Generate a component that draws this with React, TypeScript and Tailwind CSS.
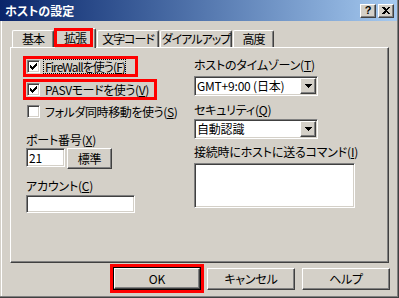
import React from "react";

const raised =
  "bg-[#d4d0c8] border border-t-white border-l-white border-r-[#404040] border-b-[#404040] shadow-[inset_-1px_-1px_#808080]";
const sunken =
  "bg-white border border-t-[#808080] border-l-[#808080] border-r-white border-b-white shadow-[inset_1px_1px_#404040,inset_-1px_-1px_#d4d0c8]";

function CheckBox({ checked }: { checked?: boolean }) {
  return (
    <span className={`${sunken} w-[13px] h-[13px] shrink-0 flex items-center justify-center`}>
      {checked && (
        <svg width="7" height="7" viewBox="0 0 7 7" shapeRendering="crispEdges">
          <rect x="0" y="2" width="1" height="3" fill="#000" />
          <rect x="1" y="3" width="1" height="3" fill="#000" />
          <rect x="2" y="4" width="1" height="3" fill="#000" />
          <rect x="3" y="3" width="1" height="3" fill="#000" />
          <rect x="4" y="2" width="1" height="3" fill="#000" />
          <rect x="5" y="1" width="1" height="3" fill="#000" />
          <rect x="6" y="0" width="1" height="3" fill="#000" />
        </svg>
      )}
    </span>
  );
}

function Arrow() {
  return (
    <svg width="7" height="4" viewBox="0 0 7 4" shapeRendering="crispEdges">
      <rect x="0" y="0" width="7" height="1" fill="#000" />
      <rect x="1" y="1" width="5" height="1" fill="#000" />
      <rect x="2" y="2" width="3" height="1" fill="#000" />
      <rect x="3" y="3" width="1" height="1" fill="#000" />
    </svg>
  );
}

function Select({ value }: { value: string }) {
  return (
    <div className={`${sunken} w-[124px] h-[20px] flex items-center`}>
      <span className="flex-1 pl-[2px] whitespace-nowrap">{value}</span>
      <span className={`${raised} w-[16px] h-[16px] flex items-center justify-center mr-[1px]`}>
        <Arrow />
      </span>
    </div>
  );
}

function Tab({ label, w, ml, selected }: { label: string; w: number; ml?: number; selected?: boolean }) {
  return (
    <div
      className={`relative flex items-center justify-center bg-[#d4d0c8] border-t border-l border-t-white border-l-white border-r border-r-[#404040] shadow-[inset_-1px_0_#808080] rounded-tl-[2px] rounded-tr-[2px] ${
        selected ? "h-[20px] -mb-[1px] z-10 pb-[2px]" : "h-[17px]"
      }`}
      style={{ width: w, marginLeft: ml ?? 0 }}
    >
      <span className="whitespace-nowrap tracking-[-1px]">{label}</span>
      {selected && (
        <div className="absolute -left-[1px] -top-[1px] w-[39px] h-[19px] border-[3px] border-[#ff0000]" />
      )}
    </div>
  );
}

export default function App() {
  return (
    <div className="w-[399px] h-[298px] bg-[#d4d0c8] border-r border-b border-r-[#404040] border-b-[#404040] text-[12px] leading-[14px] text-black font-['Noto_Sans_CJK_JP',sans-serif] [font-feature-settings:'palt'] tracking-[-0.2px] overflow-hidden">
      <div className="h-full flex flex-col border-r border-b border-[#808080]">
        {/* Title bar */}
        <div className="h-[21px] shrink-0 bg-linear-to-r from-[#0a246a] to-[#a6caf0] flex items-center pl-[5px] pr-[3px]">
          <span className="text-white font-bold text-[12px] flex-1 tracking-normal">ホストの設定</span>
          <span className={`${raised} w-[16px] h-[14px] flex items-center justify-center font-bold text-[11px] leading-none font-['Liberation_Sans',sans-serif]`}>
            ?
          </span>
          <span className={`${raised} w-[16px] h-[14px] ml-[2px] flex items-center justify-center`}>
            <svg width="8" height="7" viewBox="0 0 8 7" shapeRendering="crispEdges">
              <path d="M0 0h2l2 2 2-2h2L5 3.5 8 7H6L4 5 2 7H0l3-3.5z" fill="#000" />
            </svg>
          </span>
        </div>

        {/* Body */}
        <div className="flex-1 border-l border-l-[#d4d0c8] shadow-[inset_1px_0_#fff] flex flex-col">
          {/* Tabs */}
          <div className="mt-[7px] ml-[11px] h-[19px] flex items-end">
            <Tab label="基本" w={42} />
            <Tab label="拡張" w={42} selected />
            <Tab label="文字コード" w={62} ml={1} />
            <Tab label="ダイアルアップ" w={72} ml={1} />
            <Tab label="高度" w={41} ml={1} />
          </div>

          {/* Panel */}
          <div className="ml-[9px] w-[379px] h-[216px] shrink-0 border border-t-white border-l-white border-r-[#404040] border-b-[#404040] shadow-[inset_-1px_-1px_#808080] flex">
            {/* Left column */}
            <div className="w-[183px] pl-[12px] flex flex-col">
              <div className="mt-[8px] h-[21px] w-[115px] border-[3px] border-[#ff0000] flex items-center pl-[1px]">
                <CheckBox checked />
                <span className="ml-[3px] border border-dotted border-black pl-[1px] whitespace-nowrap leading-[13px] tracking-[-0.9px]">
                  FireWallを使う(<u>F</u>)
                </span>
              </div>
              <div className="mt-[2px] h-[21px] w-[134px] border-[3px] border-[#ff0000] flex items-center pl-[1px]">
                <CheckBox checked />
                <span className="ml-[3px] border border-transparent pl-[1px] whitespace-nowrap leading-[13px] tracking-[-0.4px]">
                  PASVモードを使う(<u>V</u>)
                </span>
              </div>
              <div className="mt-[3px] h-[17px] flex items-center pl-[4px]">
                <CheckBox />
                <span className="ml-[4px] pl-[1px] whitespace-nowrap tracking-[-0.4px]">
                  フォルダ同時移動を使う(<u>S</u>)
                </span>
              </div>
              <div className="mt-[13px] ml-[3px] whitespace-nowrap">
                ポート番号(<u>X</u>)
              </div>
              <div className="mt-[1px] ml-[3px] flex items-start">
                <div className={`${sunken} w-[39px] h-[19px] flex items-center pl-[2px]`}>21</div>
                <div className={`${raised} ml-[2px] w-[45px] h-[21px] flex items-center justify-center`}>標準</div>
              </div>
              <div className="mt-[10px] ml-[3px] whitespace-nowrap">
                アカウント(<u>C</u>)
              </div>
              <div className={`${sunken} mt-[2px] ml-[3px] w-[109px] h-[18px]`} />
            </div>

            {/* Right column */}
            <div className="flex flex-col">
              <div className="mt-[10px] whitespace-nowrap">
                ホストのタイムゾーン(<u>T</u>)
              </div>
              <div className="mt-[4px]">
                <Select value="GMT+9:00 (日本)" />
              </div>
              <div className="mt-[7px] whitespace-nowrap">
                セキュリティ(<u>Q</u>)
              </div>
              <div className="mt-[2px]">
                <Select value="自動認識" />
              </div>
              <div className="mt-[6px] whitespace-nowrap">
                接続時にホストに送るコマンド(<u>I</u>)
              </div>
              <div className={`${sunken} mt-[4px] w-[161px] h-[45px]`} />
            </div>
          </div>

          {/* Buttons */}
          <div className="mt-[1px] ml-[109px] flex items-start">
            <div className="w-[94px] h-[29px] border-[3px] border-[#ff0000]">
              <div className="w-full h-full border border-black">
                <div className={`${raised} w-full h-full flex items-center justify-center`}>OK</div>
              </div>
            </div>
            <div className={`${raised} ml-[3px] mt-[4px] w-[88px] h-[22px] flex items-center justify-center`}>キャンセル</div>
            <div className={`${raised} ml-[7px] mt-[4px] w-[88px] h-[22px] flex items-center justify-center`}>ヘルプ</div>
          </div>
        </div>
      </div>
    </div>
  );
}
